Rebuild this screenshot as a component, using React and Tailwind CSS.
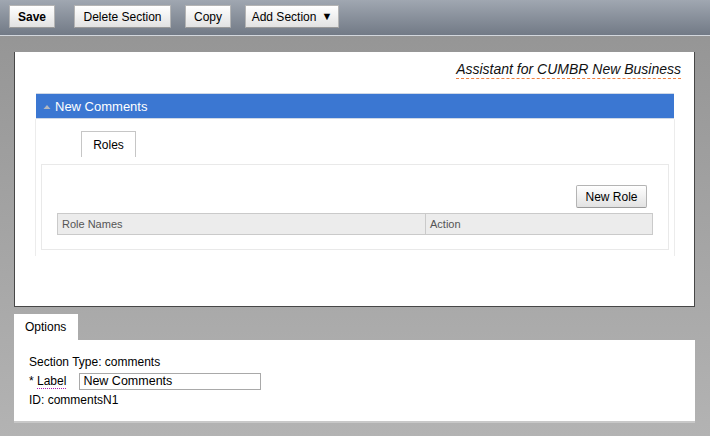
import React from 'react';

const btn =
  'flex h-[23px] items-center justify-center border border-[#b4b4b4] border-b-[#9a9a9a] bg-gradient-to-b from-white to-[#e2e2e2] text-[12px] text-black';

const App = () => {
  return (
    <div className="h-[436px] w-[710px] overflow-hidden bg-gradient-to-b from-[#939393] to-[#b3b3b3] font-['Liberation_Sans',Arial,sans-serif] text-[12px] text-black">
      {/* toolbar */}
      <div className="flex h-[36px] items-start border-b border-[#d3d7dd] bg-gradient-to-b from-[#a0a7b1] to-[#727a86] pt-[5px]">
        <button className={`${btn} ml-[9px] w-[46px] font-bold`}>Save</button>
        <button className={`${btn} ml-[19px] w-[97px]`}>Delete Section</button>
        <button className={`${btn} ml-[14px] w-[46px]`}>Copy</button>
        <button className={`${btn} ml-[14px] w-[94px] gap-[5px]`}>
          Add Section
          <span className="text-[11px] leading-none">▼</span>
        </button>
      </div>

      {/* main panel */}
      <div className="ml-[14px] mt-[16px] h-[255px] w-[681px] border-x border-b border-[#474747] bg-white">
        <div className="flex h-[26px] justify-end pr-[13px] pt-[10px]">
          <span className="text-[14px] italic leading-[15px] text-[#111] underline decoration-[#f08040] decoration-dashed decoration-1 underline-offset-[4px]">
            Assistant for CUMBR New Business
          </span>
        </div>

        <div className="ml-[21px] mt-[15px] flex h-[26px] w-[638px] items-center border-y border-[#cfd8e6] bg-[#3b77d2] pl-[7px] pt-[2px] text-[13px] text-white">
          <svg width="8" height="6" viewBox="0 0 8 6" className="mr-[4px]">
            <path d="M4 1 L7.5 5 L0.5 5 Z" fill="#b3b7bf" />
          </svg>
          New Comments
        </div>

        <div className="ml-[20px] h-[137px] w-[640px] border-x border-[#ececec] pt-[12px]">
          <div className="ml-[45px] flex h-[26px] w-[55px] items-center justify-center border border-b-0 border-[#c6c6c6] text-[12px]">
            Roles
          </div>
          <div className="ml-[5px] mt-[7px] h-[86px] w-[628px] border border-[#e9e9e9]">
            <div className="flex justify-end pr-[21px] pt-[20px]">
              <button className={`${btn} w-[71px] rounded-[2px]`}>New Role</button>
            </div>
            <div className="ml-[15px] mt-[5px] flex h-[22px] w-[596px] border border-[#cacaca] bg-[#ececec] text-[11px] text-[#555]">
              <div className="flex w-[368px] items-center border-r border-[#cacaca] pl-[4px]">Role Names</div>
              <div className="flex items-center pl-[4px]">Action</div>
            </div>
          </div>
        </div>
      </div>

      {/* options */}
      <div className="ml-[14px] mt-[7px] flex h-[26px] w-[64px] items-center bg-white pl-[11px]">Options</div>
      <div className="ml-[14px] h-[83px] w-[681px] border-b-2 border-[#c8c8c8] bg-white pl-[15px] pt-[13px] leading-[19px]">
        <div>Section Type: comments</div>
        <div className="flex h-[19px] items-center">
          <span>*&nbsp;</span>
          <span className="underline decoration-[#b020b0] decoration-dotted decoration-1 underline-offset-[3px]">Label</span>
          <input
            readOnly
            value="New Comments"
            className="ml-[13px] h-[17px] w-[182px] border border-[#a9a9a9] px-[3px] text-[12.5px] outline-none"
          />
        </div>
        <div>ID: commentsN1</div>
      </div>
    </div>
  );
};

export default App;
